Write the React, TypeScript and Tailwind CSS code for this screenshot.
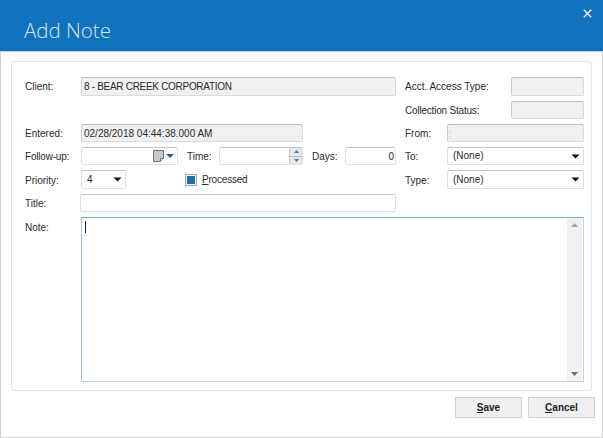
const font = "font-['Liberation_Sans',Arial,sans-serif]";

function Label({ className = "", children }: { className?: string; children: React.ReactNode }) {
  return <div className={`flex items-center text-[10px] text-[#2a2a2a] whitespace-nowrap ${className}`}>{children}</div>;
}

const readOnly = "rounded-[2px] border border-[#d5dde3] border-t-[#b9bfc4] border-l-[#c8ced3] bg-[#f0f0f0]";
const input = "rounded-[2px] border border-[#dde1e4] border-t-[#c4c7ca] bg-white";

function Caret() {
  return (
    <svg width="9" height="5" viewBox="0 0 9 5" className="shrink-0">
      <path d="M0.5 0.5h8L4.5 4.5z" fill="#111" />
    </svg>
  );
}

function Select({ className = "", value }: { className?: string; value: string }) {
  return (
    <div className={`flex items-center justify-between pl-[5px] pr-[3px] text-[10px] text-[#2a2a2a] ${input} ${className}`}>
      <span className="-mt-[1px]">{value}</span>
      <Caret />
    </div>
  );
}

export default function App() {
  return (
    <div className={`w-[603px] h-[438px] flex flex-col bg-white border border-t-0 border-[#d0d0d0] ${font}`}>
      <header className="h-[52px] shrink-0 -mx-px flex items-start justify-between bg-[#0f72ba] border-b border-[#b5d5ec]">
        <h1 className="ml-[24px] mt-[14px] text-[20.5px] leading-[32px] font-light text-[#d5e8f5] font-['Open_Sans',sans-serif]">Add Note</h1>
        <svg width="9" height="9" viewBox="0 0 9 9" className="mt-[9px] mr-[11px]">
          <path d="M0.8 0.8L8.2 8.2M8.2 0.8L0.8 8.2" stroke="#fff" strokeWidth="1.3" />
        </svg>
      </header>

      <main className="mx-[10px] mt-[9px] h-[330px] rounded-[3px] border border-[#e0e6eb] pl-[13px] pr-[7px] pt-[15px] flex flex-col">
        <div className="grid grid-cols-[56px_97px_9px_32px_84px_9px_33px_51px_9px_42px_64px_73px] grid-rows-[19px_18px_18px_18px_19px_18px] gap-y-[5px]">
          <Label className="col-start-1 row-start-1">Client:</Label>
          <div className={`col-start-2 col-span-7 row-start-1 flex items-center pl-[2px] text-[10px] tracking-[-0.3px] text-[#2a2a2a] ${readOnly}`}>8 - BEAR CREEK CORPORATION</div>
          <Label className="col-start-10 col-span-2 row-start-1">Acct. Access Type:</Label>
          <div className={`col-start-12 row-start-1 ${readOnly}`} />

          <Label className="col-start-10 col-span-2 row-start-2 tracking-[-0.2px]">Collection Status:</Label>
          <div className={`col-start-12 row-start-2 ${readOnly}`} />

          <Label className="col-start-1 row-start-3">Entered:</Label>
          <div className={`col-start-2 col-span-4 row-start-3 flex items-center pl-[2px] text-[10px] text-[#2a2a2a] ${readOnly}`}>02/28/2018 04:44:38.000 AM</div>
          <Label className="col-start-10 row-start-3">From:</Label>
          <div className={`col-start-11 col-span-2 row-start-3 flex items-center pl-[1px] text-[10px] text-[#e0b870] ${readOnly}`}>:</div>

          <Label className="col-start-1 row-start-4 tracking-[-0.2px] pt-[1px]">Follow-up:</Label>
          <div className={`col-start-2 row-start-4 flex items-center justify-end gap-[2px] pr-[3px] ${input}`}>
            <svg width="11" height="12" viewBox="0 0 11 12">
              <path d="M0.5 0.5h10v8l-3 3h-7z" fill="#c4c8cc" stroke="#6f6f6f" />
              <path d="M7.5 11.5v-3h3" fill="#eef0f2" stroke="#6f6f6f" />
            </svg>
            <svg width="8" height="4" viewBox="0 0 8 4"><path d="M0 0h8L4 4z" fill="#2f5f8f" /></svg>
          </div>
          <Label className="col-start-4 row-start-4">Time:</Label>
          <div className={`col-start-5 row-start-4 flex justify-end ${input}`}>
            <div className="w-[13px] flex flex-col border-l border-[#c8c8c8] bg-[#e6e8ea]">
              <div className="flex-1 flex items-center justify-center border-b border-[#bcbcbc]">
                <svg width="5" height="3" viewBox="0 0 5 3"><path d="M0 3h5L2.5 0z" fill="#3f7fb5" /></svg>
              </div>
              <div className="flex-1 flex items-center justify-center">
                <svg width="5" height="3" viewBox="0 0 5 3"><path d="M0 0h5L2.5 3z" fill="#3f7fb5" /></svg>
              </div>
            </div>
          </div>
          <Label className="col-start-7 row-start-4">Days:</Label>
          <div className={`col-start-8 row-start-4 flex items-center justify-end pr-[1px] text-[10px] text-[#2a2a2a] ${input}`}>0</div>
          <Label className="col-start-10 row-start-4">To:</Label>
          <Select className="col-start-11 col-span-2 row-start-4" value="(None)" />

          <Label className="col-start-1 row-start-5 pt-[2px]">Priority:</Label>
          <div className="col-start-2 row-start-5">
            <Select className="w-[45px] h-full" value="4" />
          </div>
          <div className="col-start-4 col-span-4 row-start-5 flex items-center gap-[5px] -ml-[2px]">
            <div className="w-[12px] h-[12px] border border-[#a9a9a9] bg-white p-px">
              <div className="w-full h-full bg-[#0f72ba]" />
            </div>
            <span className="text-[10px] tracking-[-0.2px] text-[#2a2a2a]"><span className="underline">P</span>rocessed</span>
          </div>
          <Label className="col-start-10 row-start-5 pt-[2px]">Type:</Label>
          <Select className="col-start-11 col-span-2 row-start-5" value="(None)" />

          <Label className="col-start-1 row-start-6">Title:</Label>
          <div className={`col-start-2 col-span-7 row-start-6 -ml-px ${input}`} />
        </div>

        <div className="mt-[5px] flex h-[165px]">
          <Label className="w-[56px] items-start pt-[3px] h-[20px]">Note:</Label>
          <div className="w-[504px] border border-[#bfd4e6] border-t-[#7ba7cc] border-l-[#a9c4dc] flex justify-between">
            <div className="w-px h-[12px] mt-[3px] ml-[3px] bg-[#222]" />
            <div className="w-[15px] mr-px bg-[#f0f0f0] flex flex-col items-center justify-between py-[5px]">
              <svg width="7" height="4" viewBox="0 0 7 4"><path d="M0 4h7L3.5 0z" fill="#a5a5a5" /></svg>
              <svg width="7" height="4" viewBox="0 0 7 4"><path d="M0 0h7L3.5 4z" fill="#6e6e6e" /></svg>
            </div>
          </div>
        </div>
      </main>

      <footer className="mt-[6px] pr-[7px] flex justify-end gap-[6px]">
        <button className="w-[67px] h-[21px] border border-[#d2d2d2] bg-[#efefef] text-[10px] font-bold text-[#222]"><span className="underline">S</span>ave</button>
        <button className="w-[67px] h-[21px] border border-[#d2d2d2] bg-[#efefef] text-[10px] font-bold text-[#222]"><span className="underline">C</span>ancel</button>
      </footer>
    </div>
  );
}
